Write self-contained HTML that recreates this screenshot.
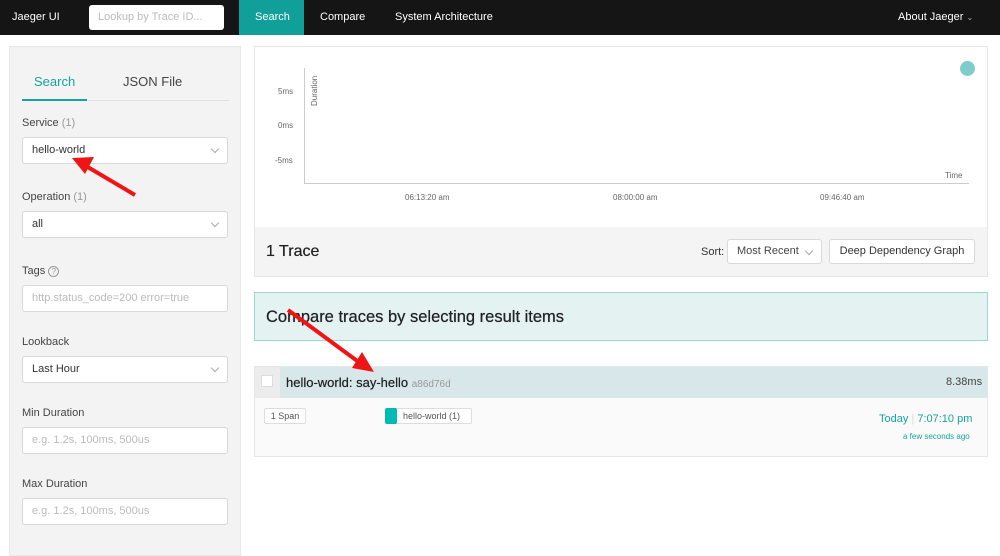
<!DOCTYPE html><html><head><meta charset="utf-8"><style>
*{box-sizing:border-box;margin:0;padding:0}
body{width:1000px;height:545px;overflow:hidden;background:#fff;font-family:"Liberation Sans",Arial,sans-serif;color:#333;position:relative}
.nav{position:absolute;left:0;top:0;width:1000px;height:35px;background:#151515;color:#fff;font-size:11px}
.nav span{position:absolute;top:11px}
.inp{position:absolute;border:1px solid #d9d9d9;border-radius:3px;background:#fff;font-size:11px;color:#bbb;padding-left:9px;line-height:26px;height:28px}
.left{position:absolute;left:9px;top:46px;width:232px;height:510px;background:#f3f3f3;border:1px solid #e8e8e8}
.lbl{position:absolute;left:22px;font-size:11px;color:#444}
.lbl i{font-style:normal;color:#999}
.sel{position:absolute;left:22px;width:206px;height:27px;border:1px solid #d9d9d9;border-radius:3px;background:#fff;font-size:11px;color:#333;padding-left:9px;line-height:25px}
.sel:after{content:"";position:absolute;right:9px;top:8px;width:5px;height:5px;border-right:1px solid #aaa;border-bottom:1px solid #aaa;transform:rotate(45deg)}
.ph{color:#bbb}
.ph:after{display:none}
.t{position:absolute;font-size:8px;color:#666}
</style></head><body>
<div class="nav">
<span style="left:12px">Jaeger UI</span>
<div class="inp" style="left:89px;top:5px;width:135px;height:25px;line-height:24px;border:none;color:#bbb">Lookup by Trace ID...</div>
<div style="position:absolute;left:239px;top:0;width:65px;height:35px;background:#119f9a"></div>
<span style="left:255px">Search</span>
<span style="left:320px">Compare</span>
<span style="left:395px">System Architecture</span>
<span style="left:898px">About Jaeger <span style="position:static;font-size:8px;color:#aaa">⌄</span></span>
</div>

<div class="left"></div>
<div style="position:absolute;left:34px;top:74px;font-size:13px;color:#17a39c">Search</div>
<div style="position:absolute;left:123px;top:74px;font-size:13px;color:#444">JSON File</div>
<div style="position:absolute;left:22px;top:100px;width:207px;height:1px;background:#e2e2e2"></div>
<div style="position:absolute;left:22px;top:99px;width:65px;height:2px;background:#17a39c"></div>
<div class="lbl" style="top:117px">Service <i>(1)</i></div>
<div class="sel" style="top:137px">hello-world</div>
<div class="lbl" style="top:191px">Operation <i>(1)</i></div>
<div class="sel" style="top:211px">all</div>
<div class="lbl" style="top:265px">Tags <span style="display:inline-block;width:11px;height:11px;border:1px solid #999;border-radius:50%;font-size:8px;text-align:center;line-height:9px;color:#999">?</span></div>
<div class="sel ph" style="top:285px">http.status_code=200 error=true</div>
<div class="lbl" style="top:336px">Lookback</div>
<div class="sel" style="top:356px">Last Hour</div>
<div class="lbl" style="top:407px">Min Duration</div>
<div class="sel ph" style="top:427px;">e.g. 1.2s, 100ms, 500us</div>
<div class="lbl" style="top:478px">Max Duration</div>
<div class="sel ph" style="top:498px">e.g. 1.2s, 100ms, 500us</div>

<div style="position:absolute;left:254px;top:46px;width:734px;height:231px;border:1px solid #e6e6e6"></div>
<div style="position:absolute;left:304px;top:68px;width:1px;height:116px;background:#ccc"></div>
<div style="position:absolute;left:304px;top:183px;width:665px;height:1px;background:#ccc"></div>
<div class="t" style="left:278px;top:87px">5ms</div>
<div class="t" style="left:278px;top:121px">0ms</div>
<div class="t" style="left:275px;top:156px">-5ms</div>
<div class="t" style="left:310px;top:106px;transform:rotate(-90deg);transform-origin:left top">Duration</div>
<div class="t" style="left:945px;top:171px">Time</div>
<div class="t" style="left:405px;top:193px">06:13:20 am</div>
<div class="t" style="left:613px;top:193px">08:00:00 am</div>
<div class="t" style="left:820px;top:193px">09:46:40 am</div>
<div style="position:absolute;left:960px;top:61px;width:15px;height:15px;border-radius:50%;background:#7fcdcb"></div>
<div style="position:absolute;left:255px;top:227px;width:732px;height:49px;background:#f4f4f4"></div>
<div style="position:absolute;left:266px;top:243px;font-size:16px;color:#222;text-shadow:0 0 0.4px #222">1 Trace</div>
<div style="position:absolute;left:701px;top:246px;font-size:11px">Sort:</div>
<div class="sel" style="left:727px;top:239px;width:95px;height:25px;line-height:23px;color:#444">Most Recent</div>
<div style="position:absolute;left:829px;top:239px;width:146px;height:25px;border:1px solid #d9d9d9;border-radius:3px;background:#fff;font-size:11px;line-height:23px;text-align:center;color:#333">Deep Dependency Graph</div>

<div style="position:absolute;left:254px;top:292px;width:734px;height:49px;background:#e4f2f2;border:1px solid #9ed6d3"></div>
<div style="position:absolute;left:266px;top:308px;font-size:16.5px;color:#222;text-shadow:0 0 0.5px #222">Compare traces by selecting result items</div>

<div style="position:absolute;left:254px;top:366px;width:734px;height:91px;border:1px solid #e6e6e6;background:#fafafa"></div>
<div style="position:absolute;left:255px;top:367px;width:732px;height:31px;background:#d7e7ea"></div>
<div style="position:absolute;left:255px;top:367px;width:25px;height:31px;background:#ececec"></div>
<div style="position:absolute;left:261px;top:375px;width:12px;height:12px;background:#fff;border:1px solid #ddd"></div>
<div style="position:absolute;left:286px;top:375px;font-size:13px;color:#222;text-shadow:0 0 0.5px #222">hello-world: say-hello <span style="font-size:10px;color:#999;text-shadow:none">a86d76d</span></div>
<div style="position:absolute;left:946px;top:376px;font-size:11px;color:#444">8.38ms</div>
<div style="position:absolute;left:264px;top:408px;width:42px;height:16px;border:1px solid #ddd;border-radius:2px;background:#fff;font-size:9px;line-height:14px;text-align:center;color:#555">1 Span</div>
<div style="position:absolute;left:385px;top:408px;width:87px;height:16px;border:1px solid #ddd;border-radius:2px;background:#fff;font-size:9px;line-height:14px;padding-left:17px;color:#555">hello-world (1)</div>
<div style="position:absolute;left:385px;top:408px;width:12px;height:16px;background:#00bab6;border-radius:2px"></div>
<div style="position:absolute;left:879px;top:413px;font-size:11px;color:#17a39c">Today <span style="color:#ddd">|</span> 7:07:10 pm</div>
<div style="position:absolute;left:903px;top:432px;font-size:8px;color:#17a39c">a few seconds ago</div>

<svg style="position:absolute;left:0;top:0" width="1000" height="545">
<line x1="135" y1="195" x2="86" y2="166" stroke="#f01414" stroke-width="4"/>
<polygon points="72,158 94,157 85,174" fill="#f01414"/>
<line x1="288" y1="310" x2="360" y2="363" stroke="#f01414" stroke-width="4"/>
<polygon points="374,372 352,368 362,352" fill="#f01414"/>
</svg>
</body></html>
